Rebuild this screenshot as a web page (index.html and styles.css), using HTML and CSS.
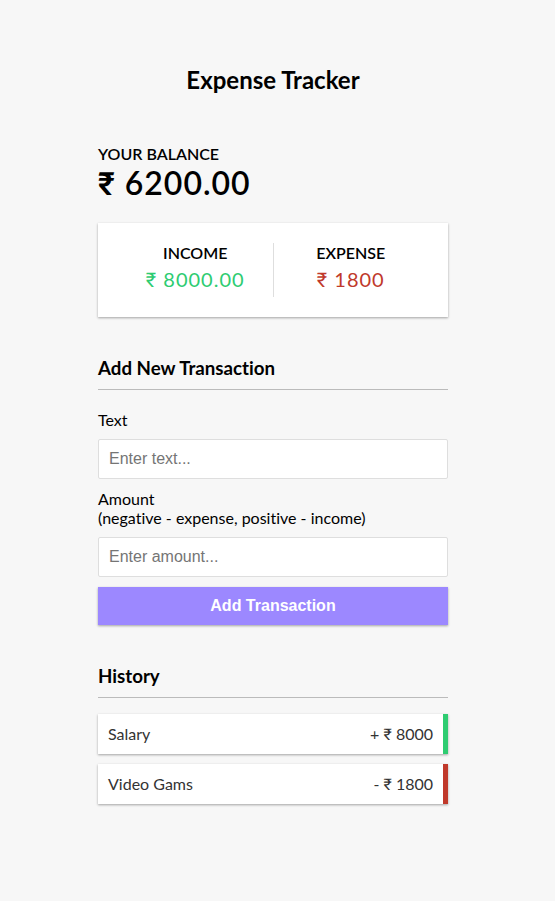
FILE: index.html
```html
<!DOCTYPE html>
<html lang="en">
<head>
<meta charset="utf-8">
<meta name="viewport" content="width=device-width, initial-scale=1">
<title>Expense Tracker</title>
<link rel="stylesheet" href="styles.css">
</head>
<body>
<h2>Expense Tracker</h2>
<main class="container">
  <h4>Your Balance</h4>
  <h1 class="balance"><span class="rupee">₹</span> 6200.00</h1>
  <div class="inc-exp-container">
    <div>
      <h4>Income</h4>
      <p class="money plus"><span class="rupee">₹</span> 8000.00</p>
    </div>
    <div>
      <h4>Expense</h4>
      <p class="money minus"><span class="rupee">₹</span> 1800</p>
    </div>
  </div>
  <h3>Add New Transaction</h3>
  <form>
    <div class="form-control">
      <label for="text">Text</label>
      <input type="text" id="text" placeholder="Enter text...">
    </div>
    <div class="form-control">
      <label for="amount">Amount<br>(negative - expense, positive - income)</label>
      <input type="number" id="amount" placeholder="Enter amount...">
    </div>
    <button class="btn" type="button">Add Transaction</button>
  </form>
  <h3>History</h3>
  <ul class="list">
    <li class="plus-item">Salary <span>+ <span class="rupee">₹</span> 8000</span></li>
    <li class="minus-item">Video Gams <span>- <span class="rupee">₹</span> 1800</span></li>
  </ul>
</main>
</body>
</html>
```
FILE: styles.css
```css
* {
  box-sizing: border-box;
}

body {
  display: flex;
  flex-direction: column;
  align-items: center;
  justify-content: center;
  min-height: 100vh;
  margin: 0;
  padding-right: 9px;
  background: #f7f7f7;
  color: #000;
  font-family: Lato, sans-serif;
  font-size: 16px;
  font-variant-ligatures: none;
}

.container {
  width: 350px;
  max-width: 100%;
  margin: 30px auto;
}

.rupee {
  font-family: Roboto, sans-serif;
  line-height: 1;
}

h1 {
  margin: 0;
  font-weight: 600;
  line-height: 40px;
  letter-spacing: 1px;
}

h3 {
  margin: 40px 0 10px;
  padding-bottom: 10px;
  border-bottom: 1px solid #bbb;
}

h4 {
  margin: 0;
  font-weight: 600;
  text-transform: uppercase;
}

.inc-exp-container {
  display: flex;
  justify-content: space-between;
  margin: 20px 0;
  padding: 20px;
  background: #fff;
  box-shadow: 0 1px 3px rgba(0, 0, 0, 0.12), 0 1px 2px rgba(0, 0, 0, 0.24);
}

.inc-exp-container > div {
  flex: 1;
  text-align: center;
}

.inc-exp-container > div:first-of-type {
  border-right: 1px solid #dedede;
}

.money {
  margin: 5px 0;
  font-size: 20px;
  line-height: 25px;
  letter-spacing: 1px;
}

.plus {
  color: #2ecc71;
}

.minus {
  color: #c0392b;
}

label {
  display: inline-block;
  margin: 10px 0;
}

input {
  display: block;
  width: 100%;
  padding: 10px;
  border: 1px solid #dedede;
  border-radius: 2px;
  font-family: "Liberation Sans", Arial, sans-serif;
  font-size: 16px;
}

.btn {
  display: block;
  width: 100%;
  margin: 10px 0 30px;
  padding: 10px;
  border: 0;
  background: #9c88ff;
  box-shadow: 0 1px 3px rgba(0, 0, 0, 0.12), 0 1px 2px rgba(0, 0, 0, 0.24);
  color: #fff;
  font-family: "Liberation Sans", Arial, sans-serif;
  font-size: 16px;
  font-weight: 700;
  cursor: pointer;
}

.list {
  margin: 16px 0 22px;
  padding: 0;
  list-style: none;
}

.list li {
  display: flex;
  justify-content: space-between;
  margin-bottom: 10px;
  padding: 10px;
  background: #fff;
  box-shadow: 0 1px 3px rgba(0, 0, 0, 0.12), 0 1px 2px rgba(0, 0, 0, 0.24);
  color: #333;
  line-height: 20px;
}

.list .plus-item {
  border-right: 5px solid #2ecc71;
}

.list .minus-item {
  border-right: 5px solid #c0392b;
}
```
